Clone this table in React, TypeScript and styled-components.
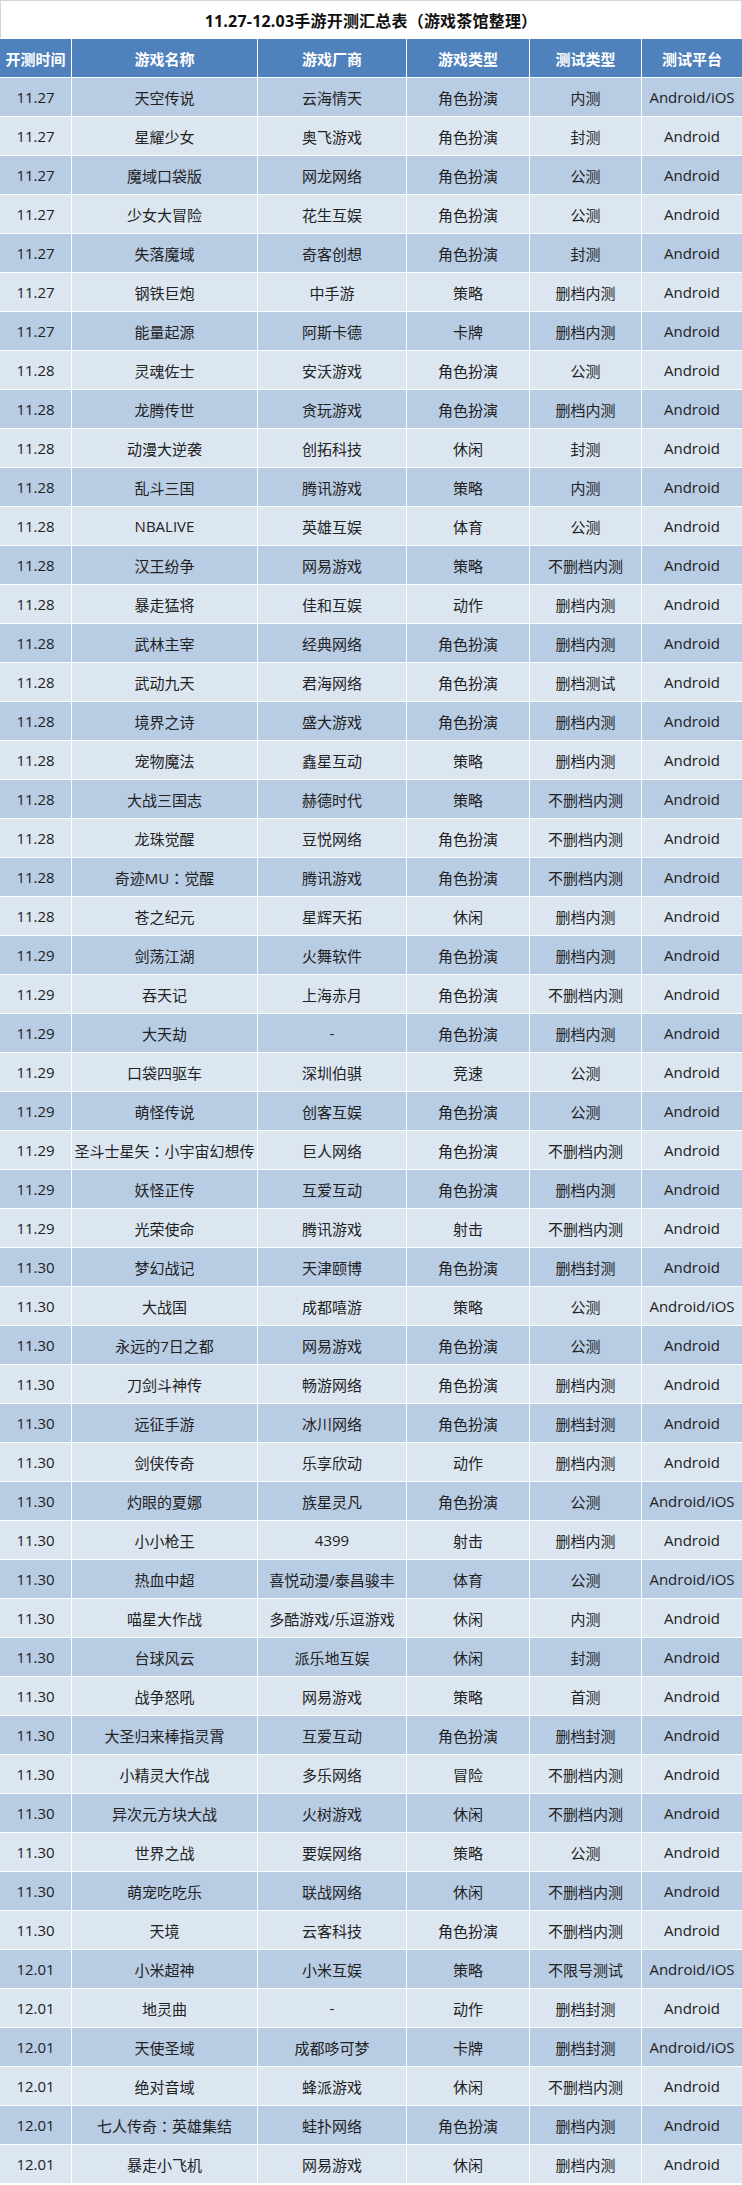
import styled, { createGlobalStyle } from "styled-components";

const GlobalStyle = createGlobalStyle`
  html, body {
    margin: 0;
    padding: 0;
    background: #ffffff;
  }
  body {
    font-family: "Open Sans", "Noto Sans CJK SC", sans-serif;
  }
`;

const COLS = "71px 185px 148px 122px 111px 100px";

const Sheet = styled.div`
  width: 742px;
  display: flex;
  flex-direction: column;
  gap: 1px;
  background: #ffffff;
`;

const TitleBar = styled.div`
  box-sizing: border-box;
  height: 38px;
  border: 1px solid #d6d6d6;
  border-bottom: none;
  display: flex;
  align-items: center;
  justify-content: center;
  font-size: 16px;
  font-weight: 700;
  color: #111111;
  letter-spacing: 0.2px;
`;

const Row = styled.div`
  display: grid;
  grid-template-columns: ${COLS};
  column-gap: 1px;
  height: 38px;
`;

const HeadCell = styled.div`
  display: flex;
  align-items: center;
  justify-content: center;
  background: #4f81bd;
  color: #ffffff;
  font-size: 15px;
  font-weight: 700;
  white-space: nowrap;
`;

const Cell = styled.div<{ $dark: boolean }>`
  display: flex;
  align-items: center;
  justify-content: center;
  background: ${({ $dark }) => ($dark ? "#b8cce4" : "#dce6f1")};
  color: #222222;
  font-size: 15px;
  white-space: nowrap;
  overflow: visible;
`;

// fullwidth colon sits centred in the reference font
const Colon = styled.span`
  font-family: "Noto Sans CJK TC", sans-serif;
`;

const headers = ["开测时间", "游戏名称", "游戏厂商", "游戏类型", "测试类型", "测试平台"];

const AI = "Android/iOS";
const A = "Android";

const rows: string[][] = [
  ["11.27", "天空传说", "云海情天", "角色扮演", "内测", AI],
  ["11.27", "星耀少女", "奥飞游戏", "角色扮演", "封测", A],
  ["11.27", "魔域口袋版", "网龙网络", "角色扮演", "公测", A],
  ["11.27", "少女大冒险", "花生互娱", "角色扮演", "公测", A],
  ["11.27", "失落魔域", "奇客创想", "角色扮演", "封测", A],
  ["11.27", "钢铁巨炮", "中手游", "策略", "删档内测", A],
  ["11.27", "能量起源", "阿斯卡德", "卡牌", "删档内测", A],
  ["11.28", "灵魂佐士", "安沃游戏", "角色扮演", "公测", A],
  ["11.28", "龙腾传世", "贪玩游戏", "角色扮演", "删档内测", A],
  ["11.28", "动漫大逆袭", "创拓科技", "休闲", "封测", A],
  ["11.28", "乱斗三国", "腾讯游戏", "策略", "内测", A],
  ["11.28", "NBALIVE", "英雄互娱", "体育", "公测", A],
  ["11.28", "汉王纷争", "网易游戏", "策略", "不删档内测", A],
  ["11.28", "暴走猛将", "佳和互娱", "动作", "删档内测", A],
  ["11.28", "武林主宰", "经典网络", "角色扮演", "删档内测", A],
  ["11.28", "武动九天", "君海网络", "角色扮演", "删档测试", A],
  ["11.28", "境界之诗", "盛大游戏", "角色扮演", "删档内测", A],
  ["11.28", "宠物魔法", "鑫星互动", "策略", "删档内测", A],
  ["11.28", "大战三国志", "赫德时代", "策略", "不删档内测", A],
  ["11.28", "龙珠觉醒", "豆悦网络", "角色扮演", "不删档内测", A],
  ["11.28", "奇迹MU：觉醒", "腾讯游戏", "角色扮演", "不删档内测", A],
  ["11.28", "苍之纪元", "星辉天拓", "休闲", "删档内测", A],
  ["11.29", "剑荡江湖", "火舞软件", "角色扮演", "删档内测", A],
  ["11.29", "吞天记", "上海赤月", "角色扮演", "不删档内测", A],
  ["11.29", "大天劫", "-", "角色扮演", "删档内测", A],
  ["11.29", "口袋四驱车", "深圳伯骐", "竞速", "公测", A],
  ["11.29", "萌怪传说", "创客互娱", "角色扮演", "公测", A],
  ["11.29", "圣斗士星矢：小宇宙幻想传", "巨人网络", "角色扮演", "不删档内测", A],
  ["11.29", "妖怪正传", "互爱互动", "角色扮演", "删档内测", A],
  ["11.29", "光荣使命", "腾讯游戏", "射击", "不删档内测", A],
  ["11.30", "梦幻战记", "天津颐博", "角色扮演", "删档封测", A],
  ["11.30", "大战国", "成都嘻游", "策略", "公测", AI],
  ["11.30", "永远的7日之都", "网易游戏", "角色扮演", "公测", A],
  ["11.30", "刀剑斗神传", "畅游网络", "角色扮演", "删档内测", A],
  ["11.30", "远征手游", "冰川网络", "角色扮演", "删档封测", A],
  ["11.30", "剑侠传奇", "乐享欣动", "动作", "删档内测", A],
  ["11.30", "灼眼的夏娜", "族星灵凡", "角色扮演", "公测", AI],
  ["11.30", "小小枪王", "4399", "射击", "删档内测", A],
  ["11.30", "热血中超", "喜悦动漫/泰昌骏丰", "体育", "公测", AI],
  ["11.30", "喵星大作战", "多酷游戏/乐逗游戏", "休闲", "内测", A],
  ["11.30", "台球风云", "派乐地互娱", "休闲", "封测", A],
  ["11.30", "战争怒吼", "网易游戏", "策略", "首测", A],
  ["11.30", "大圣归来棒指灵霄", "互爱互动", "角色扮演", "删档封测", A],
  ["11.30", "小精灵大作战", "多乐网络", "冒险", "不删档内测", A],
  ["11.30", "异次元方块大战", "火树游戏", "休闲", "不删档内测", A],
  ["11.30", "世界之战", "要娱网络", "策略", "公测", A],
  ["11.30", "萌宠吃吃乐", "联战网络", "休闲", "不删档内测", A],
  ["11.30", "天境", "云客科技", "角色扮演", "不删档内测", A],
  ["12.01", "小米超神", "小米互娱", "策略", "不限号测试", AI],
  ["12.01", "地灵曲", "-", "动作", "删档封测", A],
  ["12.01", "天使圣域", "成都哆可梦", "卡牌", "删档封测", AI],
  ["12.01", "绝对音域", "蜂派游戏", "休闲", "不删档内测", A],
  ["12.01", "七人传奇：英雄集结", "蛙扑网络", "角色扮演", "删档内测", A],
  ["12.01", "暴走小飞机", "网易游戏", "休闲", "删档内测", A],
];

const renderText = (v: string) => {
  const parts = v.split("：");
  if (parts.length === 1) return v;
  return (
    <>
      {parts[0]}
      <Colon>：</Colon>
      {parts.slice(1).join("：")}
    </>
  );
};

const App: React.FC = () => {
  return (
    <>
      <GlobalStyle />
      <Sheet>
        <TitleBar>11.27-12.03手游开测汇总表（游戏茶馆整理）</TitleBar>
        <Row>
          {headers.map((h) => (
            <HeadCell key={h}>{h}</HeadCell>
          ))}
        </Row>
        {rows.map((r, i) => (
          <Row key={i}>
            {r.map((v, j) => (
              <Cell key={j} $dark={i % 2 === 0}>
                {renderText(v)}
              </Cell>
            ))}
          </Row>
        ))}
      </Sheet>
    </>
  );
};

export default App;
